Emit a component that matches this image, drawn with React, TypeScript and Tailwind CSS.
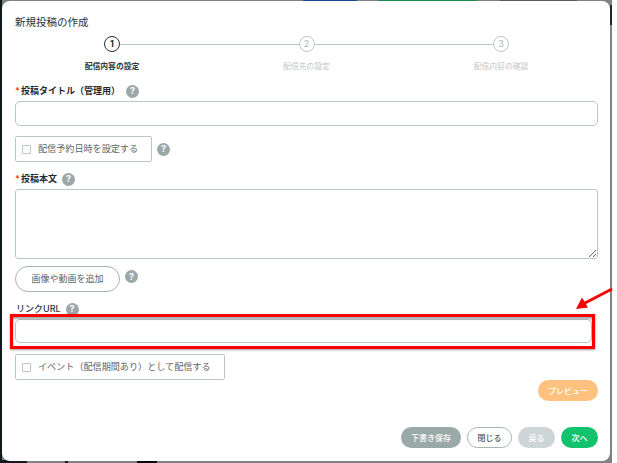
const font = "font-['Inter','Noto_Sans_CJK_JP',sans-serif]";

function Help({ className = '' }: { className?: string }) {
  return (
    <span className={`flex h-[13px] w-[13px] shrink-0 items-center justify-center rounded-full bg-[#9aa8a8] text-[9px] font-bold text-white ${className}`}>
      ?
    </span>
  );
}

function Step({ n, label, active }: { n: number; label: string; active?: boolean }) {
  return (
    <div className="relative z-10 flex w-[60px] flex-col items-center">
      <span
        className={`flex h-[16px] w-[16px] items-center justify-center rounded-full bg-white text-[9px] ${
          active ? 'border-[1.5px] border-[#1f3238] font-bold text-[#1f3238]' : 'border border-[#c0c8cc] text-[#aab2b5]'
        }`}
      >
        {n}
      </span>
      <span className={`mt-[9px] whitespace-nowrap text-[7.8px] leading-[10px] ${active ? 'font-bold text-[#2b3a40]' : 'text-[#c0c5c8]'}`}>
        {label}
      </span>
    </div>
  );
}

function Required({ children }: { children: React.ReactNode }) {
  return (
    <span className="flex text-[9px] font-bold leading-[14px] text-[#1f2c30]">
      <span className="w-[6px] text-[#f0501e]">*</span>
      {children}
    </span>
  );
}

function CheckBox({ label, width }: { label: string; width: string }) {
  return (
    <label className={`flex h-[26px] items-center gap-[7px] rounded-[2px] border border-[#bcc6c8] pl-[6px] text-[9.1px] text-[#5c6468] ${width}`}>
      <span className="h-[9px] w-[9px] rounded-[1px] border border-[#bcc4c6] bg-white" />
      {label}
    </label>
  );
}

export default function App() {
  return (
    <div className={`relative h-[463px] w-[617px] overflow-hidden bg-[#7f8483] ${font}`}>
      {/* ページ背景の切れ端 */}
      <div className="absolute left-0 top-0 h-full w-[2px] bg-[#10191d]" />
      <div className="absolute left-[303px] top-0 h-[2px] w-[54px] bg-[#1b4a8c]" />
      <div className="absolute left-[378px] top-0 h-[2px] w-[99px] bg-[#1c8a4c]" />
      <div className="absolute left-[500px] top-0 h-[2px] w-[77px] bg-[#55595a]" />
      <div className="absolute bottom-0 left-0 h-[3px] w-[27px] bg-[#10191d]" />
      <div className="absolute bottom-0 left-[65px] h-[3px] w-[3px] bg-[#10191d]" />
      <div className="absolute bottom-0 left-[137px] h-[3px] w-[20px] bg-[#0a0a0a]" />
      <div className="absolute right-0 top-0 h-full w-[5px] bg-white" />
      <div className="absolute left-[610px] top-[5px] h-[20px] w-[2px] bg-[#20262a]" />

      {/* Modal */}
      <div className="absolute left-[2px] top-[1px] flex h-[460px] w-[608px] flex-col rounded-[8px] bg-white pl-[13px] pr-[12px]">
        <h2 className="mt-[15px] text-[10.5px] leading-[14px] text-[#2b3438]">新規投稿の作成</h2>

        {/* Steps */}
        <div className="relative mt-[6px] flex justify-between px-[67px]">
          <div className="absolute left-[97px] right-[97px] top-[7.5px] h-px bg-[#bcc5c9]" />
          <Step n={1} label="配信内容の設定" active />
          <Step n={2} label="配信先の設定" />
          <Step n={3} label="配信内容の確認" />
        </div>

        <div className="mt-[13px] flex items-center gap-[6px]">
          <Required>投稿タイトル（管理用）</Required>
          <Help />
        </div>
        <input className="mt-[3px] h-[25px] w-full rounded-[5px] border border-[#bcc6c8] bg-white" />

        <div className="mt-[10px] flex items-center gap-[5px]">
          <CheckBox label="配信予約日時を設定する" width="w-[137px]" />
          <Help />
        </div>

        <div className="mt-[10px] flex items-center gap-[5px]">
          <Required>投稿本文</Required>
          <Help />
        </div>
        <textarea className="mt-[3px] h-[70px] w-full resize-y rounded-[3px] border border-[#bcc6c8] bg-white" />

        <div className="mt-[7px] flex items-start gap-[5px]">
          <button className="h-[26px] w-[105px] rounded-full border border-[#a9b2b4] bg-white text-[9px] text-[#5c6468]">
            画像や動画を追加
          </button>
          <Help className="mt-[4px]" />
        </div>

        <div className="mt-[10px] flex items-center gap-[5px] pl-px">
          <span className="text-[9px] font-medium leading-[14px] text-[#2b3438]">リンクURL</span>
          <Help />
        </div>
        <div className="relative mr-[6px] mt-[3px]">
          <input className="block h-[24px] w-full rounded-[5px] border border-[#bcc6c8] bg-white" />
          {/* 赤枠 */}
          <div className="absolute -bottom-[6px] -left-[5px] -right-[3px] -top-[5px] border-[3px] border-[#fb0000] shadow-[inset_0_2px_2px_rgba(0,0,0,0.35),0_1px_2px_rgba(0,0,0,0.4)]" />
        </div>

        <div className="mt-[11px]">
          <CheckBox label="イベント（配信期間あり）として配信する" width="w-[210px]" />
        </div>

        <div className="flex justify-end">
          <button className="h-[21px] w-[60px] rounded-full bg-[#ffc27e] text-[8px] font-medium text-white">プレビュー</button>
        </div>

        {/* Footer */}
        <div className="mt-[26px] flex justify-end gap-[6px]">
          <button className="h-[21px] w-[60px] rounded-full bg-[#9aa8a8] text-[8px] font-medium text-white">下書き保存</button>
          <button className="h-[21px] w-[45px] rounded-full border border-[#a9b2b4] bg-white text-[8px] font-medium text-[#4c5458]">閉じる</button>
          <button className="h-[21px] w-[37px] rounded-full bg-[#ced5d7] text-[8px] font-medium text-white">戻る</button>
          <button className="h-[21px] w-[37px] rounded-full bg-[#12c26c] text-[8px] font-medium text-white">次へ</button>
        </div>
      </div>

      {/* 矢印 */}
      <svg className="absolute left-[570px] top-[285px]" width="47" height="30" viewBox="0 0 47 30">
        <line x1="42" y1="4" x2="14" y2="18.5" stroke="#fb0000" strokeWidth="3" />
        <polygon points="6,24 12,12.5 18,22.5" fill="#fb0000" />
      </svg>
    </div>
  );
}
